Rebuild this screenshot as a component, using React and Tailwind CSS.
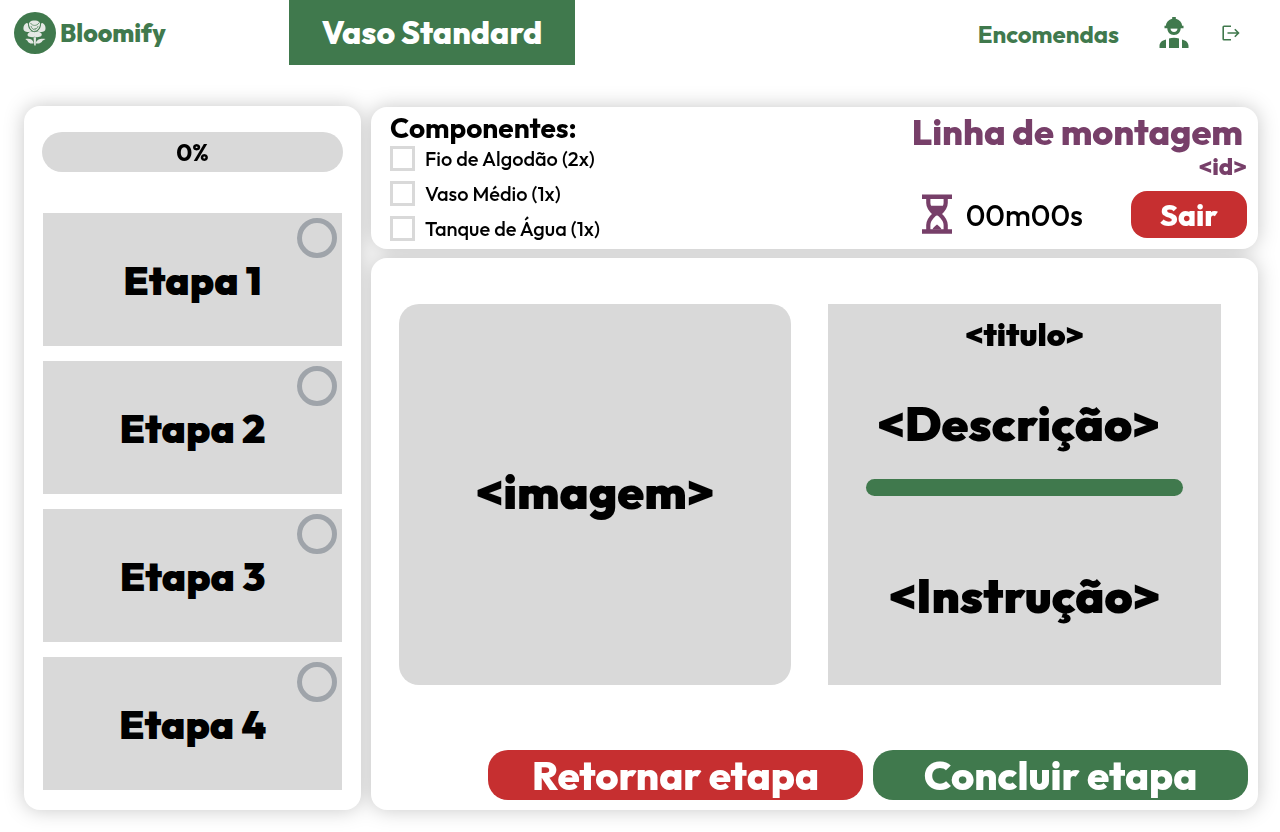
import React from 'react';

const components = ['Fio de Algodão (2x)', 'Vaso Médio (1x)', 'Tanque de Água (1x)'];
const steps = ['Etapa 1', 'Etapa 2', 'Etapa 3', 'Etapa 4'];

function RoseLogo() {
  return (
    <svg viewBox="0 0 42 42" className="size-[42px] shrink-0" aria-hidden="true">
      <circle cx="21" cy="21" r="21" fill="#40794d" />
      <g fill="#e4e8e4">
        <path d="M12.500 11C9.500 12.500 8.800 16.500 10 18.500C11.500 20.200 15.500 20.500 18 19.600C15 17.500 13.800 14.500 14 11.500Z" />
        <path d="M28.500 11C31.500 12.500 32.200 16.500 31 18.500C29.500 20.200 25.500 20.500 23 19.600C26 17.500 27.200 14.500 27 11.500Z" />
        <path d="M20.500 8.500C17.500 8 15.500 9.500 14.900 11.500C14.900 15 17 18.500 20.500 19.300C24 18.500 26.100 15 26.100 11.500C25.500 9.500 23.500 8 20.500 8.500Z" />
        <path d="M20.500 20.200C18 19.600 15.500 19.800 14.500 21C13 22 13.300 24.500 15.500 24.700C17.500 25.300 19 25.200 20.500 24.800C22 25.200 24 25.300 25.500 24.700C28 24.500 28.300 22 27 21C25.500 19.800 23 19.600 20.500 20.200Z" />
        <path d="M19.500 25.300H22L21.700 33.500H20.300Z" />
        <path d="M19.800 31.300C17 32 14 31 13.500 28.700L11.300 27C15.500 26 19 27 19.800 31.300Z" />
        <path d="M21.700 31.300C24.500 32 27.500 31 28.500 28.700L31.500 27C27.500 26 22.500 27 21.700 31.300Z" />
      </g>
      <g fill="none" stroke="#40794d" strokeWidth=".7">
        <path d="M16.500 11C18 14 23 14.500 25 10.800M17 14C17.500 16.500 19.500 18 22 18M24 14C24 16 22.500 17 20.500 16.500" />
      </g>
    </svg>
  );
}

function WorkerIcon() {
  return (
    <svg viewBox="0 0 30 31" className="h-[31px] w-[30px]" fill="#40794d" aria-hidden="true">
      <path d="M13.200 0h3.600v1.700c3.600.8 6 3.300 6.400 7h1.300v2.600H5.500V8.700h1.300c.4-3.700 2.800-6.200 6.400-7Z" />
      <path fillRule="evenodd" d="M8.300 10.500h13.400c.2 4.500-2.500 7.500-6.700 7.500s-6.900-3-6.700-7.500Zm3.200.9c.1 2.300 1.400 3.500 3.500 3.500s3.400-1.200 3.500-3.500Z" />
      <path d="M10 21.500c3-1 7-1 10 0V31H10ZM7 22.500V31H.5v-2.200c0-3 2.500-5.400 6.500-6.300ZM23 22.500V31H29.500v-2.200c0-3-2.500-5.400-6.500-6.300Z" />
    </svg>
  );
}

function LogoutIcon() {
  return (
    <svg viewBox="0 0 18 16" className="h-4 w-[18px]" fill="none" stroke="#40794d" strokeWidth="1.600" aria-hidden="true">
      <path d="M9 1.200H2Q1.200 1.200 1.200 2V14Q1.200 14.800 2 14.800H9M5.500 8H16.500M12.800 4.300L16.500 8L12.800 11.700" />
    </svg>
  );
}

function HourglassIcon() {
  return (
    <svg viewBox="0 0 30 40" className="h-10 w-[30px]" aria-hidden="true">
      <path fill="#773f69" d="M0 0.500h30v4.500H0ZM0 35.300h30V39.800H0Z" />
      <path fill="none" stroke="#773f69" strokeWidth="4.200" d="M6.300 4V9C6.300 14 9.500 17 12.800 20C9.500 23 6.300 26.500 6.300 31V36M23.700 4V9C23.700 14 20.500 17 17.200 20C20.500 23 23.700 26.500 23.700 31V36" />
      <path fill="#773f69" d="M7 11.800H23L18.500 20L17 21.500H13L11.500 20ZM10.500 35.500C10.800 33.500 13 32.500 15 30.500C17 32.500 19.200 33.500 19.500 35.500Z" />
    </svg>
  );
}

export default function App() {
  return (
    <div className="min-h-screen bg-white pb-[22px] font-['Outfit','Lato',sans-serif] text-black">
      <header className="flex h-[65px] items-center pr-10 pl-3.5">
        <a href="#inicio" className="flex w-[275px] items-center gap-1 text-[25px] font-extrabold text-[#40794d]">
          <RoseLogo />
          <span className="pt-0.5">Bloomify</span>
        </a>
        <a href="#vaso" className="flex w-[286px] items-center justify-center self-stretch bg-[#40794d] pb-0.5 text-[32px] font-extrabold text-white">
          Vaso Standard
        </a>
        <nav className="ml-auto flex items-center">
          <a href="#encomendas" className="pt-0.5 text-2xl font-bold text-[#40794d]">Encomendas</a>
          <a href="#perfil" aria-label="Perfil" className="ml-10"><WorkerIcon /></a>
          <button type="button" aria-label="Terminar sessão" className="ml-[33px]"><LogoutIcon /></button>
        </nav>
      </header>

      <main className="mt-[41px] mr-[22px] ml-6 flex gap-2.5 drop-shadow-[0_0_10px_rgba(0,0,0,0.22)]">
        <aside className="w-[337px] shrink-0 rounded-2xl bg-white px-[18px] pt-[26px] pb-5">
          <div role="progressbar" aria-label="Progresso" aria-valuenow={0} aria-valuemin={0} aria-valuemax={100} className="flex h-10 items-center justify-center rounded-full bg-[#d9d9d9] text-2xl font-bold">
            0%
          </div>
          <ol className="mt-[41px] flex flex-col gap-[15px] px-px">
            {steps.map((step) => (
              <li key={step}>
                <button type="button" className="relative flex h-[133px] w-full items-center justify-center bg-[#d9d9d9] text-[40px] font-black">
                  {step}
                  <span className="absolute top-[5px] right-[5px] size-10 rounded-full border-5 border-[#9fa4aa]" />
                </button>
              </li>
            ))}
          </ol>
        </aside>

        <div className="flex min-w-0 flex-1 flex-col gap-[9px] pt-px">
          <section className="flex h-[142px] justify-between rounded-2xl bg-white pr-[11px] pl-[19px]">
            <div className="pt-[3px]">
              <h2 className="text-[28px] leading-9 font-bold">Componentes:</h2>
              <ul className="flex flex-col gap-2.5">
                {components.map((item) => (
                  <li key={item}>
                    <label className="flex items-center gap-2.5 text-xl leading-[25px] font-medium">
                      <input type="checkbox" className="size-[25px] appearance-none border-3 border-[#d9d9d9] bg-white checked:bg-[#40794d]" />
                      {item}
                    </label>
                  </li>
                ))}
              </ul>
            </div>
            <div className="flex flex-col items-end pt-[3px]">
              <h1 className="pr-1 text-[36px] leading-[44px] font-extrabold text-[#773f69]">Linha de montagem</h1>
              <p className="text-2xl leading-6 font-extrabold text-[#773f69]">&lt;id&gt;</p>
              <div className="mt-3 flex items-center">
                <HourglassIcon />
                <time className="ml-3.5 pt-0.5 text-[30px] leading-[46px] font-medium">00m00s</time>
                <button type="button" className="ml-12 h-[47px] w-[116px] rounded-2xl bg-[#c62f30] pt-0.5 text-[30px] font-extrabold text-white">Sair</button>
              </div>
            </div>
          </section>

          <section className="flex flex-1 flex-col rounded-2xl bg-white pt-[46px] pb-2.5">
            <div className="grid h-[381px] grid-cols-[392fr_393fr] gap-[37px] pr-[37px] pl-7">
              <div className="flex items-center justify-center rounded-[20px] bg-[#d9d9d9] pb-2 text-5xl font-black">&lt;imagem&gt;</div>
              <article className="flex flex-col items-center bg-[#d9d9d9] px-[38px] pt-2.5">
                <h3 className="text-[32px] leading-10 font-black">&lt;titulo&gt;</h3>
                <p className="mt-[39px] pr-3 text-5xl leading-[60px] font-black">&lt;Descrição&gt;</p>
                <hr className="mt-[26px] h-[17px] w-full rounded-full border-0 bg-[#40794d]" />
                <p className="mt-[69px] text-5xl leading-[60px] font-black">&lt;Instrução&gt;</p>
              </article>
            </div>
            <div className="mt-auto flex justify-end gap-2.5 pr-2.5 text-[40px] leading-[50px] font-extrabold text-white">
              <button type="button" className="h-[50px] w-[375px] rounded-[20px] bg-[#c62f30]">Retornar etapa</button>
              <button type="button" className="h-[50px] w-[375px] rounded-[20px] bg-[#40794d]">Concluir etapa</button>
            </div>
          </section>
        </div>
      </main>
    </div>
  );
}
